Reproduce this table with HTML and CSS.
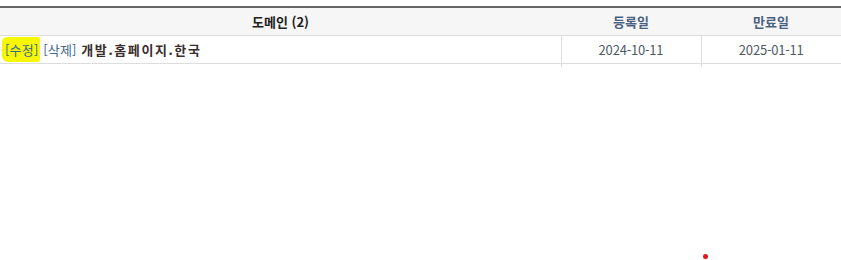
FILE: index.html
```html
<!DOCTYPE html>
<html lang="ko">
<head>
    <meta charset="UTF-8">
    <title>도메인 목록</title>
    <link rel="stylesheet" href="styles.css">
</head>
<body>
    <table class="domains">
        <colgroup>
            <col>
            <col class="col-date">
            <col class="col-date">
        </colgroup>
        <thead>
            <tr>
                <th class="th-name">도메인 (2)</th>
                <th>등록일</th>
                <th>만료일</th>
            </tr>
        </thead>
        <tbody>
            <tr>
                <td class="name">
                    <a href="#" class="act marked">[수정]</a>
                    <a href="#" class="act">[삭제]</a>
                    <b class="domain">개발.홈페이지.한국</b>
                </td>
                <td class="date">2024-10-11</td>
                <td class="date">2025-01-11</td>
            </tr>
            <tr class="stub">
                <td></td>
                <td class="date"></td>
                <td class="date"></td>
            </tr>
        </tbody>
    </table>

    <span class="dot"></span>
</body>
</html>
```
FILE: styles.css
```css
body {
    margin: 0;
    padding-top: 6px;
    background: #fff;
    font-family: "Noto Sans CJK KR", "Noto Sans", sans-serif;
    font-size: 13px;
}
.domains {
    width: 100%;
    border-collapse: collapse;
    border-top: 2px solid #666;
}
.col-date {
    width: 140px;
}
.domains th {
    background: #f6f6f6;
    height: 27px;
    padding: 0;
    border-bottom: 1px solid #ddd;
    font-weight: bold;
    color: #4a6282;
    text-align: center;
}
.domains th.th-name {
    color: #222;
}
.domains td {
    height: 27px;
    padding: 0 5px;
    border-bottom: 1px solid #ddd;
}
.domains td.date {
    border-left: 1px solid #ddd;
    text-align: center;
    color: #4f5a66;
    letter-spacing: -0.2px;
}
.domains tr.stub td {
    height: 3px;
    border-bottom: none;
}
.act {
    color: #3e6890;
    text-decoration: none;
    letter-spacing: 0.2px;
}
.marked {
    background: #f7f700;
    border-radius: 5px 2px 3px 6px;
    padding: 3px 1px 3px 3px;
    margin-left: -3px;
}
.domain {
    color: #3a2d2d;
    letter-spacing: 1.6px;
    margin-left: 1px;
}
.dot {
    position: absolute;
    left: 703px;
    top: 254px;
    width: 5px;
    height: 5px;
    border-radius: 50%;
    background: #e8141c;
}
```
